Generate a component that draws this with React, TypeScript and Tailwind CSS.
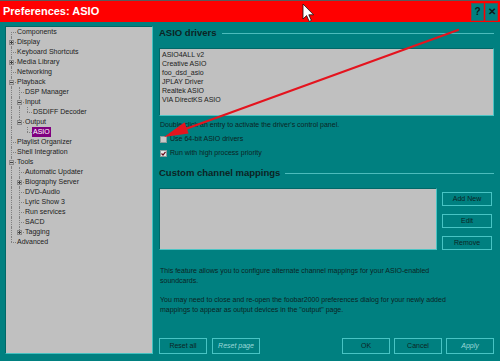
import React from 'react';

type Guide = 'pipe' | 'none' | 'tee' | 'end' | 'first';

interface TreeRow {
  label: string;
  guides: Guide[];
  expander?: 'plus' | 'minus';
  selected?: boolean;
}

const treeRows: TreeRow[] = [
  { label: 'Components', guides: ['first'] },
  { label: 'Display', guides: ['tee'], expander: 'plus' },
  { label: 'Keyboard Shortcuts', guides: ['tee'] },
  { label: 'Media Library', guides: ['tee'], expander: 'plus' },
  { label: 'Networking', guides: ['tee'] },
  { label: 'Playback', guides: ['tee'], expander: 'minus' },
  { label: 'DSP Manager', guides: ['pipe', 'tee'] },
  { label: 'Input', guides: ['pipe', 'tee'], expander: 'minus' },
  { label: 'DSDIFF Decoder', guides: ['pipe', 'pipe', 'end'] },
  { label: 'Output', guides: ['pipe', 'end'], expander: 'minus' },
  { label: 'ASIO', guides: ['pipe', 'none', 'end'], selected: true },
  { label: 'Playlist Organizer', guides: ['tee'] },
  { label: 'Shell Integration', guides: ['tee'] },
  { label: 'Tools', guides: ['tee'], expander: 'minus' },
  { label: 'Automatic Updater', guides: ['pipe', 'tee'] },
  { label: 'Biography Server', guides: ['pipe', 'tee'], expander: 'plus' },
  { label: 'DVD-Audio', guides: ['pipe', 'tee'] },
  { label: 'Lyric Show 3', guides: ['pipe', 'tee'] },
  { label: 'Run services', guides: ['pipe', 'tee'] },
  { label: 'SACD', guides: ['pipe', 'tee'] },
  { label: 'Tagging', guides: ['pipe', 'end'], expander: 'plus' },
  { label: 'Advanced', guides: ['end'] },
];

const drivers = ['ASIO4ALL v2', 'Creative ASIO', 'foo_dsd_asio', 'JPLAY Driver', 'Realtek ASIO', 'VIA DirectKS ASIO'];

const GuideCell = ({ kind, expander }: { kind: Guide; expander?: 'plus' | 'minus' }) => (
  <div className="relative w-[8px] h-full shrink-0">
    {(kind === 'pipe' || kind === 'tee') && (
      <div className="absolute left-[4px] top-0 bottom-0 border-l border-dotted border-[#808080]" />
    )}
    {kind === 'end' && <div className="absolute left-[4px] top-0 h-1/2 border-l border-dotted border-[#808080]" />}
    {kind === 'first' && <div className="absolute left-[4px] top-1/2 bottom-0 border-l border-dotted border-[#808080]" />}
    {kind !== 'pipe' && kind !== 'none' && (
      <div className="absolute left-[4px] top-1/2 w-[5px] border-t border-dotted border-[#808080]" />
    )}
    {expander && (
      <div className="absolute left-[2px] top-[2.5px] w-[5px] h-[5px] bg-[#c0c0c0] border border-[#8a8a8a]">
        <div className="absolute left-0 top-[1px] w-[3px] h-px bg-[#404040]" />
        {expander === 'plus' && <div className="absolute left-[1px] top-0 w-px h-[3px] bg-[#404040]" />}
      </div>
    )}
  </div>
);

const Button = ({ label, disabled, className = '' }: { label: string; disabled?: boolean; className?: string }) => (
  <div
    className={`flex items-center justify-center border border-[#48c4c4] text-[7px] ${
      disabled ? 'text-[#9ad8d8] italic' : 'text-[#0c2424]'
    } ${className}`}
  >
    {label}
  </div>
);

const Checkbox = ({ checked }: { checked?: boolean }) => (
  <div
    className={`w-[7px] h-[7px] shrink-0 border border-[#8c9c9c] flex items-center justify-center ${
      checked ? 'bg-[#e8e8e8]' : 'bg-[#c8c8c8]'
    }`}
  >
    {checked && (
      <svg width="5" height="5" viewBox="0 0 5 5">
        <path d="M0.5 2.5 L2 4 L4.5 0.8" stroke="#6a0a1a" strokeWidth="1.2" fill="none" />
      </svg>
    )}
  </div>
);

const App = () => {
  return (
    <div className="relative w-[500px] h-[361px] overflow-hidden bg-[#008080] font-['Liberation_Sans',Arial,sans-serif] text-[#0c2424]">
      {/* Title bar */}
      <div className="h-[22px] border-t border-[#5a5a5a] bg-[#ff0000] flex items-center pl-[3px] pr-[2px]">
        <span className="text-[11px] font-bold text-white leading-none">Preferences: ASIO</span>
        <div className="ml-auto flex gap-px">
          <div className="w-[13px] h-[18px] bg-[#008080] border border-[#4a5a5a] flex items-center justify-center text-[10px] font-bold text-[#101818]">
            ?
          </div>
          <div className="w-[13px] h-[18px] bg-[#008080] border border-[#4a5a5a] flex items-center justify-center text-[10px] font-bold text-[#101818]">
            ✕
          </div>
        </div>
      </div>

      <div className="flex pt-[4px]">
        {/* Tree */}
        <div className="ml-[5px] w-[148px] h-[328px] bg-[#c0c0c0] border border-t-[#006868] border-l-[#006868] border-b-[#44c0c0] border-r-[#44c0c0] pl-[1px]">
          {treeRows.map((row) => (
            <div key={row.label} className="flex h-[10px] items-stretch">
              {row.guides.map((g, i) => (
                <GuideCell key={i} kind={g} expander={i === row.guides.length - 1 ? row.expander : undefined} />
              ))}
              <div className="flex items-center ml-[1px]">
                <span
                  className={`text-[7px] leading-[10px] px-px whitespace-nowrap ${
                    row.selected ? 'bg-[#800080] text-white' : 'text-[#1c1c1c]'
                  }`}
                >
                  {row.label}
                </span>
              </div>
            </div>
          ))}
        </div>

        {/* Right page */}
        <div className="ml-[6px] w-[335px] h-[328px] flex flex-col">
          <div className="h-[14px] flex items-center">
            <span className="text-[9.5px] font-bold leading-none">ASIO drivers</span>
            <div className="flex-1 h-px bg-[#4cbcbc] ml-[5px]" />
          </div>

          <div className="mt-[8px] h-[68px] bg-[#c0c0c0] border border-t-[#006868] border-l-[#006868] border-b-[#4cc4c4] border-r-[#4cc4c4] pl-[2px] pt-px">
            {drivers.map((d) => (
              <div key={d} className="h-[9px] leading-[9px] text-[7px] text-[#1c1c1c]">
                {d}
              </div>
            ))}
          </div>

          <div className="mt-[4px] h-[9px] leading-[9px] text-[7px] pl-px">
            Double-click an entry to activate the driver's control panel.
          </div>

          <div className="mt-[6px] h-[9px] flex items-center gap-[3px] pl-px">
            <Checkbox />
            <span className="text-[7px]">Use 64-bit ASIO drivers</span>
          </div>
          <div className="mt-[5px] h-[9px] flex items-center gap-[3px] pl-px">
            <Checkbox checked />
            <span className="text-[7px]">Run with high process priority</span>
          </div>

          <div className="mt-[8px] h-[14px] flex items-center">
            <span className="text-[9.5px] font-bold leading-none">Custom channel mappings</span>
            <div className="flex-1 h-px bg-[#4cbcbc] ml-[5px]" />
          </div>

          <div className="mt-[8px] flex">
            <div className="w-[278px] h-[62px] bg-[#c0c0c0] border border-t-[#006868] border-l-[#006868] border-b-[#4cc4c4] border-r-[#4cc4c4]" />
            <div className="ml-auto mr-[2px] w-[50px] pt-[4px] flex flex-col gap-[8px]">
              <Button label="Add New" className="h-[14px]" />
              <Button label="Edit" className="h-[14px]" />
              <Button label="Remove" className="h-[14px]" />
            </div>
          </div>

          <div className="mt-[16px] pl-px text-[7px] leading-[10px] whitespace-nowrap">
            <p>
              This feature allows you to configure alternate channel mappings for your ASIO-enabled
              <br />
              soundcards.
            </p>
            <p className="mt-[9px]">
              You may need to close and re-open the foobar2000 preferences dialog for your newly added
              <br />
              mappings to appear as output devices in the "output" page.
            </p>
          </div>

          <div className="mt-auto flex h-[16px]">
            <Button label="Reset all" className="w-[48px]" />
            <Button label="Reset page" disabled className="w-[48px] ml-[5px]" />
            <Button label="OK" className="w-[48px] ml-auto" />
            <Button label="Cancel" className="w-[48px] ml-[4px]" />
            <Button label="Apply" disabled className="w-[48px] ml-[4px]" />
          </div>
        </div>
      </div>

      {/* Annotation arrow and mouse cursor */}
      <svg className="absolute inset-0 pointer-events-none" width="500" height="361" viewBox="0 0 500 361">
        <line x1="458" y1="30" x2="180" y2="131" stroke="#e4141e" strokeWidth="2.2" strokeLinecap="round" />
        <polygon points="164,137 188.6,133.4 184.6,122.2" fill="#e4141e" />
        <path
          d="M303 4 L303 19 L306.6 15.6 L309.2 21.4 L311.4 20.4 L308.8 14.8 L313.6 14.8 Z"
          fill="#ffffff"
          stroke="#111"
          strokeWidth="0.8"
          strokeLinejoin="round"
        />
      </svg>
    </div>
  );
};

export default App;
